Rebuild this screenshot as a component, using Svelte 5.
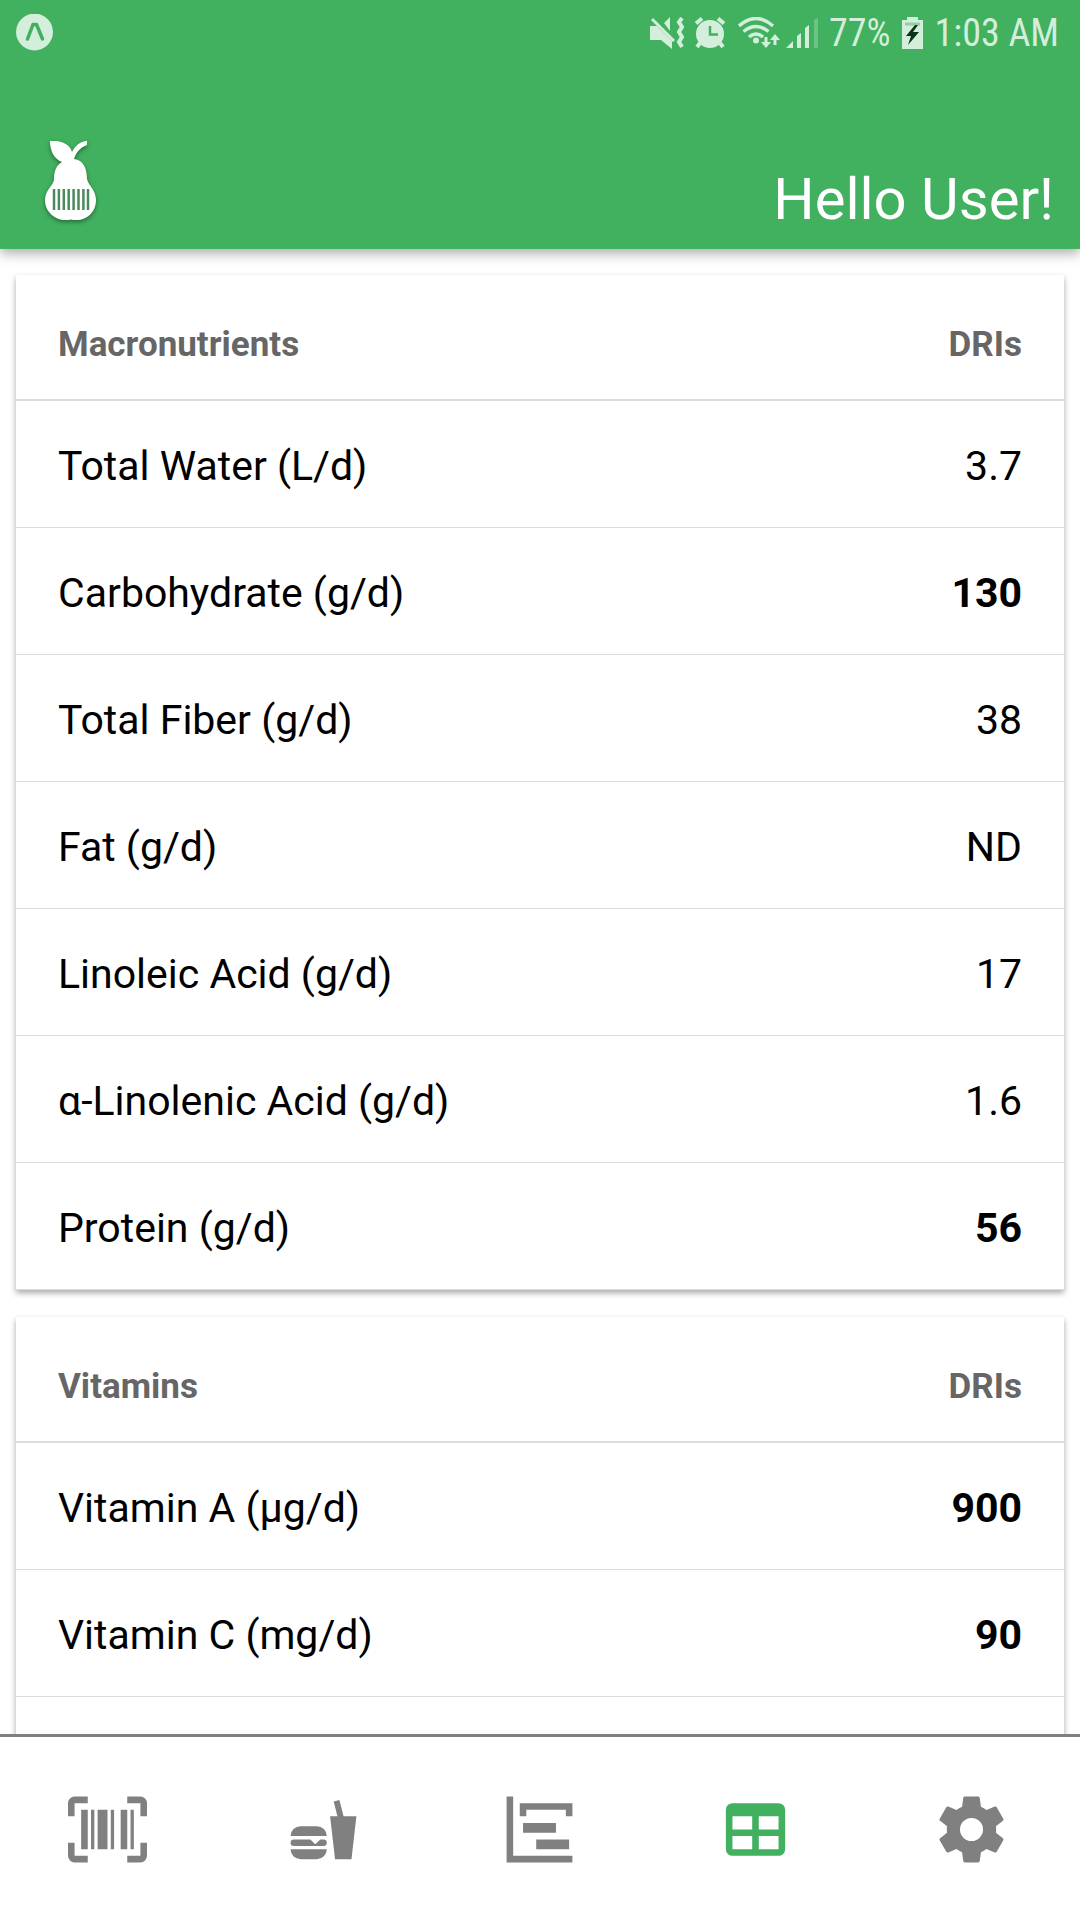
<script>
  let active = 'table';

  const sections = [
    {
      title: 'Macronutrients',
      rows: [
        { name: 'Total Water (L/d)', value: '3.7' },
        { name: 'Carbohydrate (g/d)', value: '130', bold: true },
        { name: 'Total Fiber (g/d)', value: '38' },
        { name: 'Fat (g/d)', value: 'ND' },
        { name: 'Linoleic Acid (g/d)', value: '17' },
        { name: 'α-Linolenic Acid (g/d)', value: '1.6' },
        { name: 'Protein (g/d)', value: '56', bold: true }
      ]
    },
    {
      title: 'Vitamins',
      rows: [
        { name: 'Vitamin A (µg/d)', value: '900', bold: true },
        { name: 'Vitamin C (mg/d)', value: '90', bold: true },
        { name: '', value: '' }
      ]
    }
  ];

  const tabs = [
    {
      id: 'scan',
      label: 'Scan',
      path: 'M4,6H6V18H4V6M7,6H8V18H7V6M9,6H12V18H9V6M13,6H14V18H13V6M16,6H18V18H16V6M19,6H20V18H19V6M2,4V8H0V4A2,2 0 0,1 2,2H6V4H2M22,2A2,2 0 0,1 24,4V8H22V4H18V2H22M2,16V20H6V22H2A2,2 0 0,1 0,20V16H2M22,20V16H24V20A2,2 0 0,1 22,22H18V20H22Z'
    },
    {
      id: 'food',
      label: 'Food',
      path: 'M15.5,21L14,8H16.23L15.1,3.46L16.84,3L18.09,8H22L20.5,21H15.5M5,11H10A3,3 0 0,1 13,14H2A3,3 0 0,1 5,11M13,18A3,3 0 0,1 10,21H5A3,3 0 0,1 2,18H13M3,15H8L9.5,16.5L11,15H12A1,1 0 0,1 13,16A1,1 0 0,1 12,17H3A1,1 0 0,1 2,16A1,1 0 0,1 3,15Z'
    },
    {
      id: 'chart',
      label: 'Chart',
      path: 'M2,2H4V20H22V22H2V2M7,10H17V13H7V10M11,15H21V18H11V15M6,4H22V8H20V6H8V8H6V4Z'
    },
    {
      id: 'table',
      label: 'Table',
      path: 'M5,4H19A2,2 0 0,1 21,6V18A2,2 0 0,1 19,20H5A2,2 0 0,1 3,18V6A2,2 0 0,1 5,4M5,8V12H11V8H5M13,8V12H19V8H13M5,14V18H11V14H5M13,14V18H19V14H13Z'
    },
    {
      id: 'settings',
      label: 'Settings',
      path: 'M12,15.5A3.5,3.5 0 0,1 8.5,12A3.5,3.5 0 0,1 12,8.5A3.5,3.5 0 0,1 15.5,12A3.5,3.5 0 0,1 12,15.5M19.43,12.97C19.47,12.65 19.5,12.33 19.5,12C19.5,11.67 19.47,11.34 19.43,11L21.54,9.37C21.73,9.22 21.78,8.95 21.66,8.73L19.66,5.27C19.54,5.05 19.27,4.96 19.05,5.05L16.56,6.05C16.04,5.66 15.5,5.32 14.87,5.07L14.5,2.42C14.46,2.18 14.25,2 14,2H10C9.75,2 9.54,2.18 9.5,2.42L9.13,5.07C8.5,5.32 7.96,5.66 7.44,6.05L4.95,5.05C4.73,4.96 4.46,5.05 4.34,5.27L2.34,8.73C2.21,8.95 2.27,9.22 2.46,9.37L4.57,11C4.53,11.34 4.5,11.67 4.5,12C4.5,12.33 4.53,12.65 4.57,12.97L2.46,14.63C2.27,14.78 2.21,15.05 2.34,15.27L4.34,18.73C4.46,18.95 4.73,19.03 4.95,18.95L7.44,17.94C7.96,18.34 8.5,18.68 9.13,18.93L9.5,21.58C9.54,21.82 9.75,22 10,22H14C14.25,22 14.46,21.82 14.5,21.58L14.87,18.93C15.5,18.67 16.04,18.34 16.56,17.94L19.05,18.95C19.27,19.03 19.54,18.95 19.66,18.73L21.66,15.27C21.78,15.05 21.73,14.78 21.54,14.63L19.43,12.97Z'
    }
  ];
</script>

<div class="app">
  <header>
    <div class="status-bar">
      <svg width="38" height="38" viewBox="0 0 38 38">
        <circle cx="18.5" cy="18" r="18.5" fill="#d3eedb" />
        <path d="M11.5 25 17 10.5h3.500L26.500 25" fill="none" stroke="#41b05f" stroke-width="3.500" stroke-linecap="round" stroke-linejoin="round" />
      </svg>
      <div class="status-icons">
        <!-- muted, vibrate -->
        <svg width="39" height="32" viewBox="0 0 39 32" fill="#d3eedb">
          <path d="M0 9h7l15 15v8l-11-9H0zM14 6l6-6v14z" />
          <path d="M2 2l22 22" stroke="#d3eedb" stroke-width="3" />
          <path d="M32 1l-3 4 3 5-3 5 3 5-3 5 3 5" fill="none" stroke="#d3eedb" stroke-width="4" />
        </svg>
        <!-- alarm -->
        <svg width="37" height="32" viewBox="0 0 37 32" fill="none" stroke="#d3eedb">
          <circle cx="15" cy="17" r="14" fill="#d3eedb" stroke="none" />
          <path d="M1 6.500l6-5M29 6.500l-6-5" stroke-width="4" />
          <path d="M5 26l-3 4M25 26l3 4" stroke-width="4" />
          <path d="M15 9v8.500h8" stroke="#41b05f" stroke-width="2.500" />
        </svg>
        <!-- wifi -->
        <svg width="42" height="32" viewBox="0 0 42 32" fill="none" stroke="#d3eedb" stroke-width="3.500">
          <path d="M1 9q17-15 34 0M5.500 14.500q12.500-10 25 0M11 20q7-6 14 0" />
          <circle cx="18" cy="23.500" r="3" fill="#d3eedb" stroke="none" />
          <path d="M28 20v8M37 28v-8" stroke-width="3" />
          <path d="M23 25h10l-5 6zM32 23h10l-5-6z" fill="#d3eedb" stroke="none" />
        </svg>
        <!-- signal -->
        <svg width="32" height="32" viewBox="0 0 32 32" fill="#d3eedb">
          <path d="M0 31l7-7v7zM11 19l4-3v15h-4zM19 11l4-3v23h-4z" />
          <path d="M28 3l4-2v30h-4z" opacity="0.300" />
        </svg>
      </div>
      <span>77%</span>
      <svg width="22" height="32" viewBox="0 0 22 32">
        <path d="M5 3V0h11v3h5v29H0V3z" fill="#d3eedb" />
        <path d="M3 7h15" stroke="#8fd0a2" stroke-width="3" />
        <path d="M13 8 4 19h5l-3 9 11-13h-6l5-7z" fill="#0b3317" />
      </svg>
      <span>1:03 AM</span>
    </div>

    <div class="title-bar">
      <svg class="pear" width="52" height="80" viewBox="0 0 52 80">
        <path d="M5 0C16-1 25 3 27 11 30 5 35 0 42 0V4C36 6 31 11 29 18 38 19 42 27 42 38 43 44 51 49 51 59 51 71 42 79 32 79Q28 79 26 78.500 24 79 20 79C10 79 0 71 0 59 0 49 9 44 9 38 9 29 12 24 17 21 9 18 5 10 5 0Z" fill="#fff" />
        <path d="M9 48v21M13.900 48v21M18.800 48v21M23.700 48v21M28.600 48v21M33.500 48v21M38.400 48v21M43 48v21" stroke="#4a8a5c" stroke-width="2.500" />
      </svg>
      <h1>Hello User!</h1>
    </div>
  </header>

  <main>
    {#each sections as section}
      <table>
        <thead>
          <tr>
            <th scope="col">{section.title}</th>
            <th scope="col" class="value">DRIs</th>
          </tr>
        </thead>
        <tbody>
          {#each section.rows as row}
            <tr>
              <td>{row.name}</td>
              <td class="value" class:bold={row.bold}>{row.value}</td>
            </tr>
          {/each}
        </tbody>
      </table>
    {/each}
  </main>

  <nav>
    {#each tabs as tab}
      <button
        type="button"
        class:active={active === tab.id}
        aria-label={tab.label}
        on:click={() => (active = tab.id)}
      >
        <svg viewBox="0 0 24 24"><path d={tab.path} /></svg>
      </button>
    {/each}
  </nav>
</div>

<style>
  :global(body) {
    margin: 0;
    background: #fff;
  }

  .app {
    display: flex;
    flex-direction: column;
    height: 100vh;
    overflow: hidden;
    font-family: Roboto, 'Noto Sans', sans-serif;
    color: #000;
  }

  header {
    flex: none;
    position: relative;
    background: #41b05f;
    box-shadow: 0 4px 12px rgba(0, 0, 0, 0.35);
  }

  .status-bar {
    display: flex;
    align-items: center;
    gap: 11px;
    height: 65px;
    padding: 0 21px 0 16px;
    font-family: 'Roboto Condensed', Roboto, sans-serif;
    font-size: 38px;
    line-height: 44px;
    color: #d3eedb;
  }

  .status-icons {
    display: flex;
    gap: 6px;
    margin-left: auto;
  }

  .title-bar {
    display: flex;
    align-items: flex-end;
    justify-content: space-between;
    padding: 76px 26px 20px 45px;
  }

  .pear {
    margin-bottom: 8px;
    filter: drop-shadow(0 2px 2px rgba(0, 0, 0, 0.4));
  }

  h1 {
    margin: 0;
    font-size: 58px;
    font-weight: 400;
    line-height: 60px;
    color: #fff;
  }

  main {
    flex: 1;
    min-height: 0;
    overflow: hidden;
    padding: 26px 16px 0;
  }

  table {
    width: 100%;
    margin-bottom: 27px;
    border-spacing: 0;
    background: #fff;
    box-shadow: 0 3px 6px rgba(0, 0, 0, 0.35);
  }

  th,
  td {
    box-sizing: border-box;
    padding: 4px 42px 0;
    text-align: left;
  }

  th {
    height: 126px;
    padding-top: 14px;
    border-bottom: 2px solid #dcdcdc;
    font-size: 35px;
    font-weight: 700;
    color: #666;
  }

  td {
    height: 127px;
    border-bottom: 1px solid #dcdcdc;
    font-size: 41px;
  }

  .value {
    text-align: right;
  }

  .bold {
    font-weight: 700;
  }

  nav {
    flex: none;
    position: relative;
    display: flex;
    height: 183px;
    border-top: 3px solid #808080;
    background: #fff;
  }

  button {
    flex: 1;
    display: flex;
    align-items: center;
    justify-content: center;
    padding: 2px 2px 0 0;
    border: none;
    background: none;
    color: #808080;
    cursor: pointer;
  }

  button svg {
    width: 79px;
    height: 79px;
    fill: currentColor;
  }

  button.active {
    color: #41b05f;
  }
</style>
